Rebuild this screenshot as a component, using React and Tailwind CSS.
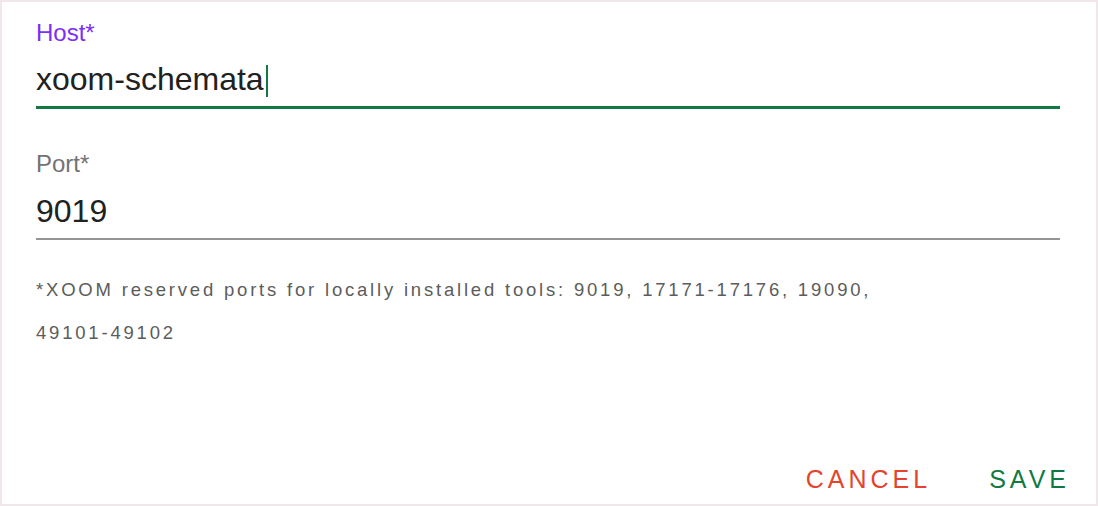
export default function App() {
  return (
    <div
      className="w-[1098px] h-[506px] bg-white border-2 border-[#efe7e9] flex flex-col"
      style={{ fontFamily: '"Liberation Sans", Arial, sans-serif' }}
    >
      <div className="pl-[34px] pr-[36px] pt-[17px]">
        <div className="text-[24px] leading-[28px] text-[#7b2ff7]">Host*</div>
        <div className="mt-[12px] pb-[7px] border-b-[3px] border-[#117a43]">
          <div className="text-[32px] leading-[40px] text-[#212121]">
            xoom-schemata
            <span className="inline-block w-[2px] h-[32px] bg-[#117a43] ml-[2px] align-[-7px]" />
          </div>
        </div>

        <div className="mt-[41px] text-[24px] leading-[28px] text-[#737373]">Port*</div>
        <div className="mt-[13px] pb-[7px] border-b-2 border-[#949494]">
          <div className="text-[32px] leading-[40px] text-[#212121]">9019</div>
        </div>

        <p className="mt-[28px] text-[18.5px] leading-[43px] tracking-[2.8px] text-[#5c5c5c]">
          *XOOM reserved ports for locally installed tools: 9019, 17171-17176, 19090,
          <br />
          49101-49102
        </p>
      </div>

      <div className="mt-auto flex justify-end gap-[58px] pr-[26px] pb-[11px]">
        <button className="text-[25px] leading-[28px] tracking-[4px] text-[#e4432d]">CANCEL</button>
        <button className="text-[25px] leading-[28px] tracking-[4px] text-[#117a43]">SAVE</button>
      </div>
    </div>
  );
}
